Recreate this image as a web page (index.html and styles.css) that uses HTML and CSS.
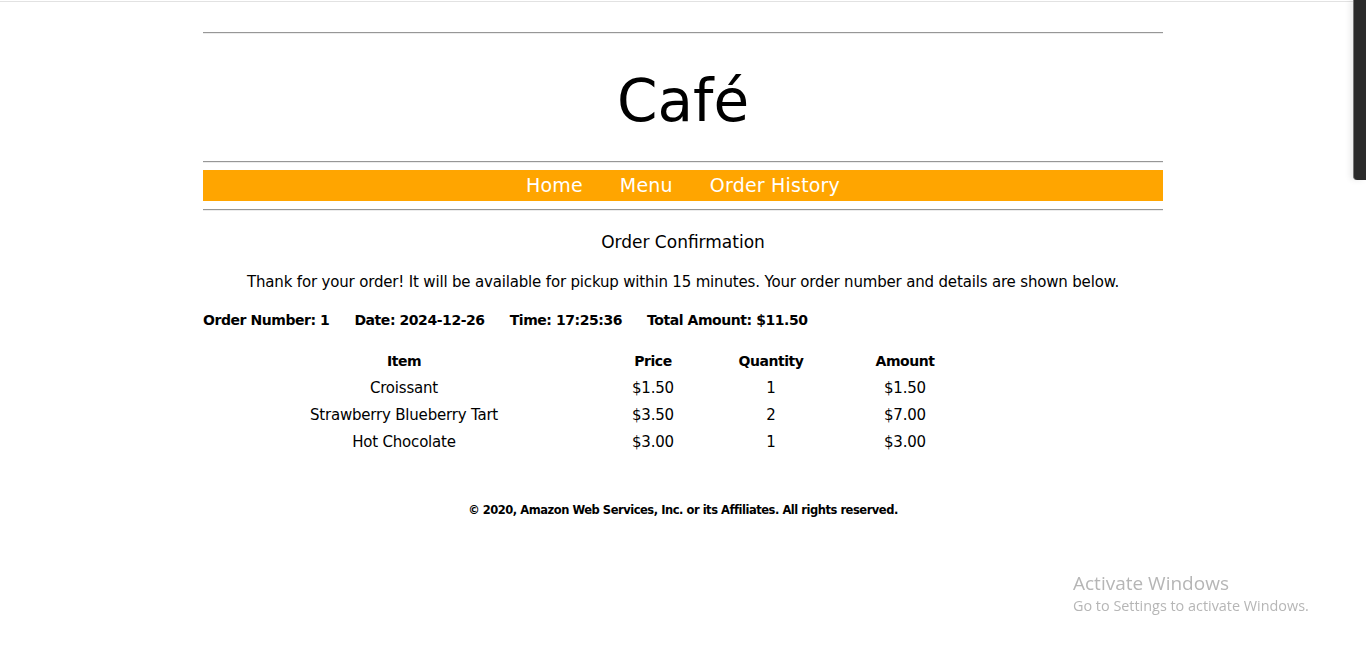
FILE: index.html
```html
<!DOCTYPE html>
<html lang="en">
<head>
<meta charset="utf-8">
<title>Café - Order Confirmation</title>
<link rel="stylesheet" href="styles.css">
</head>
<body>
<div class="topline"></div>
<div class="page">
  <hr class="rule rule-top">
  <h1 class="logo">Café</h1>
  <hr class="rule">
  <nav class="nav">
    <a href="#">Home</a>
    <a href="#">Menu</a>
    <a href="#">Order History</a>
  </nav>
  <hr class="rule">
  <h2 class="title">Order Confirmation</h2>
  <p class="intro">Thank for your order! It will be available for pickup within 15 minutes. Your order number and details are shown below.</p>
  <div class="summary">
    <span>Order Number: 1</span>
    <span>Date: 2024-12-26</span>
    <span>Time: 17:25:36</span>
    <span>Total Amount: $11.50</span>
  </div>
  <table class="items">
    <colgroup>
      <col class="c-item"><col class="c-price"><col class="c-qty"><col class="c-amt">
    </colgroup>
    <thead>
      <tr><th>Item</th><th>Price</th><th>Quantity</th><th>Amount</th></tr>
    </thead>
    <tbody>
      <tr><td>Croissant</td><td>$1.50</td><td>1</td><td>$1.50</td></tr>
      <tr><td>Strawberry Blueberry Tart</td><td>$3.50</td><td>2</td><td>$7.00</td></tr>
      <tr><td>Hot Chocolate</td><td>$3.00</td><td>1</td><td>$3.00</td></tr>
    </tbody>
  </table>
  <footer class="footer">© 2020, Amazon Web Services, Inc. or its Affiliates. All rights reserved.</footer>
</div>
<div class="sidepanel"></div>
<div class="watermark">
  <div class="wm-title">Activate Windows</div>
  <div class="wm-sub">Go to Settings to activate Windows.</div>
</div>
</body>
</html>
```
FILE: styles.css
```css
html, body {
  margin: 0;
  padding: 0;
  background: #fff;
}
body {
  font-family: "DejaVu Sans", "Liberation Sans", sans-serif;
  color: #000;
  overflow: hidden;
}
.topline {
  height: 1px;
  margin-top: 1px;
  background: #e2e2e2;
  margin-right: 13px;
}
.page {
  width: 960px;
  margin: 0 auto;
}
.rule {
  border: 0;
  border-top: 1px solid #979797;
  border-bottom: 1px solid #ececec;
  margin: 0;
  height: 0;
}
.rule-top {
  margin-top: 30px;
}
.logo {
  font-family: "Comic Sans MS", "DejaVu Sans", sans-serif;
  font-weight: normal;
  font-size: 58px;
  text-align: center;
  margin: 0;
  height: 127px;
  line-height: 134px;
}
.nav {
  background: #ffa500;
  margin-top: 7px;
  margin-bottom: 8px;
  height: 31px;
  display: flex;
  justify-content: center;
  align-items: center;
  gap: 37px;
}
.nav a {
  color: #fff;
  text-decoration: none;
  font-size: 19px;
  line-height: 29px;
  font-family: "DejaVu Sans", sans-serif;
  letter-spacing: 0.2px;
}
.title {
  font-family: "Comic Sans MS", "DejaVu Sans", sans-serif;
  font-weight: normal;
  font-size: 17px;
  text-align: center;
  margin: 20px 0 0;
  line-height: 22px;
}
.intro {
  font-size: 15px;
  text-align: center;
  margin: 19px 0 0;
  line-height: 20px;
  letter-spacing: -0.17px;
}
.summary {
  display: flex;
  gap: 25px;
  font-weight: bold;
  font-size: 14px;
  margin-top: 18px;
  line-height: 20px;
  letter-spacing: -0.44px;
}
.items {
  border-collapse: collapse;
  margin-top: 17px;
  font-size: 15px;
}
.items th, .items td {
  text-align: center;
  padding: 0;
  height: 27px;
  letter-spacing: -0.2px;
}
.items th {
  font-weight: bold;
  font-size: 14px;
  letter-spacing: -0.44px;
}
.c-item { width: 402px; }
.c-price { width: 96px; }
.c-qty { width: 140px; }
.c-amt { width: 128px; }
.footer {
  text-align: center;
  font-size: 11.5px;
  line-height: 16px;
  font-weight: bold;
  margin-top: 47px;
  letter-spacing: -0.47px;
}
.sidepanel {
  position: absolute;
  top: 0;
  right: 0;
  width: 12px;
  height: 180px;
  background: #2b2b2b;
  border-left: 1px solid #777;
  border-bottom-left-radius: 4px;
  box-shadow: -3px 0 6px rgba(0,0,0,0.08);
}
.watermark {
  position: fixed;
  left: 1073px;
  top: 572px;
  color: #b6b6b6;
  font-family: "Open Sans", "DejaVu Sans", sans-serif;
}
.wm-title {
  font-size: 19px;
  line-height: 23px;
}
.wm-sub {
  font-size: 14.4px;
  line-height: 22px;
}
```
